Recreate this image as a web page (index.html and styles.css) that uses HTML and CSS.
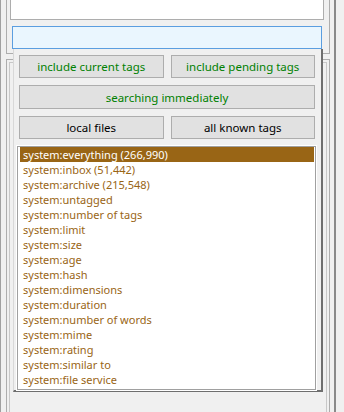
FILE: index.html
```html
<!DOCTYPE html>
<html>
<head>
<meta charset="utf-8">
<link rel="stylesheet" href="styles.css">
</head>
<body>
<div class="window">
  <div class="col">
    <div class="top-box">
      <div class="white-panel"></div>
      <div class="search-input"></div>
    </div>
    <div class="bottom-box">
      <div class="bottom-inner"></div>
    </div>
  </div>
  <div class="popup">
    <div class="btn-row">
      <div class="btn green">include current tags</div>
      <div class="btn green">include pending tags</div>
    </div>
    <div class="btn green">searching immediately</div>
    <div class="btn-row">
      <div class="btn">local files</div>
      <div class="btn">all known tags</div>
    </div>
    <div class="listbox">
      <div class="item selected">system:everything (266,990)</div>
      <div class="item">system:inbox (51,442)</div>
      <div class="item">system:archive (215,548)</div>
      <div class="item">system:untagged</div>
      <div class="item">system:number of tags</div>
      <div class="item">system:limit</div>
      <div class="item">system:size</div>
      <div class="item">system:age</div>
      <div class="item">system:hash</div>
      <div class="item">system:dimensions</div>
      <div class="item">system:duration</div>
      <div class="item">system:number of words</div>
      <div class="item">system:mime</div>
      <div class="item">system:rating</div>
      <div class="item">system:similar to</div>
      <div class="item">system:file service</div>
    </div>
  </div>
</div>
</body>
</html>
```
FILE: styles.css
```css
html, body {
  margin: 0;
  padding: 0;
  background: #f0f0f0;
  width: 344px;
  height: 412px;
  overflow: hidden;
  font-family: "Noto Sans", "Open Sans", sans-serif;
  font-size: 11px;
}
.window {
  position: relative;
  width: 336px;
  height: 412px;
  border-left: 1px solid #a0a0a0;
  border-right: 2px solid #8a8a8a;
  box-sizing: border-box;
  padding-left: 5px;
}
.col {
  display: flex;
  flex-direction: column;
  gap: 5px;
  width: 324px;
}
.top-box {
  height: 54px;
  border: 1px solid #adadad;
  border-top: none;
  box-sizing: border-box;
  padding: 0 5px 0 3px;
  display: flex;
  flex-direction: column;
}
.white-panel {
  height: 20px;
  background: #fff;
  border: 1px solid #adadad;
  border-top: none;
  box-sizing: border-box;
}
.search-input {
  margin: 6px 0 0 2px;
  width: 310px;
  height: 23px;
  box-sizing: border-box;
  border: 1px solid #5b9ee0;
  background: #eaf6fe;
}
.bottom-box {
  height: 360px;
  border: 1px solid #adadad;
  box-sizing: border-box;
  padding: 2px;
}
.bottom-inner {
  height: 100%;
  border: 1px solid #c8c8c8;
  box-sizing: border-box;
}
.popup {
  position: absolute;
  left: 12px;
  top: 49px;
  width: 310px;
  height: 343px;
  box-sizing: border-box;
  background: #f0f0f0;
  border-left: 1px solid #d8d8d8;
  border-right: 2px solid #6e6e6e;
  border-bottom: 2px solid #6e6e6e;
  padding: 6px 5px 0 3px;
  display: flex;
  flex-direction: column;
  gap: 7px;
}
.btn-row {
  display: flex;
  gap: 7px;
  margin-left: 2px;
  margin-right: 1px;
}
.popup > .btn {
  margin-left: 2px;
  margin-right: 1px;
}
.btn {
  flex: 1;
  height: 23px;
  box-sizing: border-box;
  border: 1px solid #adadad;
  background: #e1e1e1;
  color: #000;
  display: flex;
  align-items: center;
  justify-content: center;
  line-height: 15px;
  font-size: 11.5px;
}
.btn.green {
  color: #008000;
}
.listbox {
  height: 244px;
  box-sizing: border-box;
  border: 1px solid #a0a0a0;
  background: #fff;
  padding: 0 1px 0 2px;
  outline: 1px solid #fff;
}
.item {
  height: 15px;
  line-height: 15px;
  padding-left: 3px;
  color: #996515;
  white-space: nowrap;
}
.item.selected {
  background: #996515;
  color: #fff;
}
```
